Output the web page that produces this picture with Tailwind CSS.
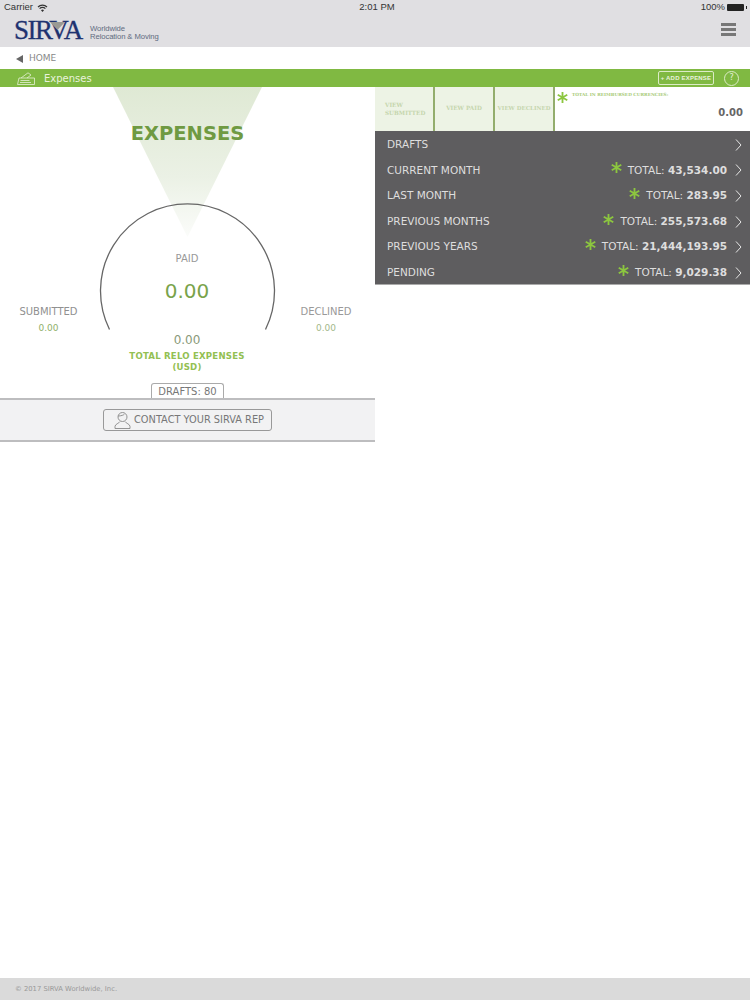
<!DOCTYPE html>
<html lang="en">
<head>
  <meta charset="UTF-8">
  <title>Expenses</title>
  <script src="https://cdn.jsdelivr.net/npm/@tailwindcss/browser@4"></script>
</head>
<body class="bg-white font-['DejaVu_Sans',sans-serif] w-[750px] h-[1000px] overflow-hidden flex flex-col">
  <!-- header -->
  <header class="h-[47px] shrink-0 bg-[#e0dfe2] relative">
    <div class="h-[15px] pl-[4px] pr-[3px] flex items-center justify-between text-[9.5px] text-[#333] font-['Liberation_Sans',sans-serif]">
      <div class="flex items-center gap-[4px] w-[200px]">
        <span>Carrier</span>
        <svg width="11" height="8" viewBox="0 0 11 8" fill="none" stroke="#333" stroke-width="1.2"><path d="M1 3a6.500 6.500 0 0 1 9 0M2.600 4.700a4 4 0 0 1 5.800 0"/><path d="M5.500 8L4 6.300a2 2 0 0 1 3 0z" fill="#333" stroke="none"/></svg>
      </div>
      <span class="font-medium ml-[3px]">2:01 PM</span>
      <div class="flex items-center justify-end gap-[2px] w-[200px]">
        <span>100%</span>
        <div class="w-[17px] h-[7px] bg-[#222] rounded-[1px]"></div>
        <div class="w-[1px] h-[3px] bg-[#222]"></div>
      </div>
    </div>
    <div class="flex items-start justify-between pl-[14px] pr-[14px] pt-[1px]">
      <div class="flex items-center">
        <div class="relative text-[27px] leading-[29px] text-[#1e3270] font-['Liberation_Serif',serif] tracking-[-1.500px] w-[70px] [-webkit-text-stroke:0.3px_#1e3270]">SIRVA
          <svg class="absolute left-[36px] top-[6px]" width="15" height="8" viewBox="0 0 15 8"><path d="M0 0H15L7.500 8z" fill="#9a9a94"/></svg>
        </div>
        <div class="ml-[6px] mt-[5px] text-[7.700px] leading-[8.500px] text-[#5f6b80] font-['Liberation_Sans',sans-serif] tracking-[-0.100px]">Worldwide<br>Relocation &amp; Moving</div>
      </div>
      <div class="flex flex-col gap-[2px] mt-[7px]">
        <div class="w-[15px] h-[3px] bg-[#777]"></div>
        <div class="w-[15px] h-[3px] bg-[#777]"></div>
        <div class="w-[15px] h-[3px] bg-[#777]"></div>
      </div>
    </div>
  </header>

  <!-- breadcrumb -->
  <div class="h-[22px] shrink-0 flex items-center pl-[16px] pt-[1px] gap-[6px] text-[9px] text-[#888]">
    <div class="w-0 h-0 border-y-[4px] border-y-transparent border-r-[7px] border-r-[#666]"></div>
    <span>HOME</span>
  </div>

  <!-- green bar -->
  <div class="h-[18px] shrink-0 bg-[#80b942] flex items-center pl-[17px] pr-[11px] text-white">
    <svg width="18" height="13" viewBox="0 0 18 13" fill="none" stroke="#e6f0d6" stroke-width="0.800">
      <path d="M2 6L.5 12.500H17.500V6z"/>
      <path d="M4 6L11 .8l3 2.200-4 3M3.500 8.500h9M3 10.500h11"/>
    </svg>
    <span class="ml-[9px] text-[10px] pt-[1px] text-[#e9f2dd]">Expenses</span>
    <div class="ml-auto h-[14px] w-[56px] border border-[#dcebc6] rounded-[2px] flex items-center justify-center text-[6px] text-[#e9f2dd] font-['Liberation_Sans',sans-serif] font-bold tracking-[0.200px]">+ ADD EXPENSE</div>
    <div class="ml-[10px] w-[15px] h-[15px] rounded-full border border-[#dcebc6] flex items-center justify-center text-[8px] text-[#e9f2dd]">?</div>
  </div>

  <main class="flex items-start">
    <!-- left panel -->
    <section class="w-[375px] shrink-0 flex flex-col">
      <div class="relative h-[311px] flex flex-col">
        <svg class="absolute inset-0" width="375" height="311" viewBox="0 0 375 311" fill="none">
          <defs>
            <linearGradient id="beam" x1="0" y1="0" x2="0" y2="1">
              <stop offset="0" stop-color="#dfe9d4"/>
              <stop offset="0.6" stop-color="#ebf1e5"/>
              <stop offset="1" stop-color="#fbfcfa"/>
            </linearGradient>
          </defs>
          <path d="M113 0H262L187.500 150z" fill="url(#beam)"/>
          <path d="M109.500 242.500A87 87 0 1 1 265.500 242.500" stroke="#666" stroke-width="1.300"/>
        </svg>
        <h1 class="relative mt-[34px] text-center text-[19.500px] leading-[26px] font-bold text-[#6f9a42]">EXPENSES</h1>
        <div class="relative mt-[105px] flex items-start">
          <div class="w-[97px] pt-[53px] text-center">
            <div class="text-[10px] leading-[14px] text-[#909090]">SUBMITTED</div>
            <div class="mt-[3px] text-[9px] leading-[12px] text-[#8fb06b]">0.00</div>
          </div>
          <div class="flex-1 text-center">
            <div class="text-[10px] leading-[14px] text-[#999]">PAID</div>
            <div class="mt-[12px] text-[20px] leading-[26px] text-[#79a34b]">0.00</div>
            <div class="mt-[28px] text-[12px] leading-[16px] text-[#8a9a7a]">0.00</div>
            <div class="text-[8.600px] leading-[11px] mt-[3px] font-bold text-[#93c052] tracking-[0.200px]">TOTAL RELO EXPENSES<br>(USD)</div>
          </div>
          <div class="w-[98px] pt-[53px] text-center">
            <div class="text-[10px] leading-[14px] text-[#999]">DECLINED</div>
            <div class="mt-[3px] text-[9px] leading-[12px] text-[#a3b88a]">0.00</div>
          </div>
        </div>
        <div class="absolute left-[151px] bottom-0 w-[73px] h-[15px] pt-[1px] border border-b-0 border-[#aaa] rounded-t-[3px] flex items-center justify-center text-[10px] text-[#777] bg-white">DRAFTS: 80</div>
      </div>
      <div class="h-[44px] bg-[#f2f2f3] border-y-2 border-y-[#bdbdbf] flex items-center justify-center">
        <div class="w-[169px] h-[22px] border border-[#999] rounded-[3px] flex items-center pl-[10px] gap-[3px] text-[9.800px] text-[#777] whitespace-nowrap">
          <svg class="shrink-0" width="17" height="18" viewBox="0 0 17 18" fill="none" stroke="#888" stroke-width="0.900">
            <circle cx="8.500" cy="6" r="4.500"/>
            <path d="M4 5c3 0 6-1 6.500-2M6 10.500C5 12.500 1 13 1 15.500V17.500H16V15.500C16 13 12 12.500 11 10.500"/>
          </svg>
          <span class="pt-[1px]">CONTACT YOUR SIRVA REP</span>
        </div>
      </div>
    </section>

    <!-- right panel -->
    <section class="flex-1 flex flex-col">
      <div class="h-[44px] flex">
        <div class="w-[60px] bg-[#edf3e5] border-r-2 border-r-[#93ad6d] flex items-center pl-[10px] pb-[1px] text-[5.700px] leading-[8px] font-bold text-[#c6d6ae] font-['DejaVu_Serif',serif]">VIEW<br>SUBMITTED</div>
        <div class="w-[60px] bg-[#edf3e5] border-r-2 border-r-[#93ad6d] flex items-center justify-center pb-[2px] text-[5.700px] font-bold text-[#c6d6ae] font-['DejaVu_Serif',serif]">VIEW PAID</div>
        <div class="w-[60px] bg-[#edf3e5] border-r-2 border-r-[#93ad6d] flex items-center justify-center pb-[2px] text-[5.500px] font-bold text-[#c6d6ae] font-['DejaVu_Serif',serif] whitespace-nowrap">VIEW DECLINED</div>
        <div class="flex-1 flex flex-col pr-[7px]">
          <div class="flex items-start pl-[2px] pt-[5px] gap-[4px]">
            <svg class="shrink-0" width="11" height="11" viewBox="0 0 12 12" stroke="#8cc63f" stroke-width="2"><path d="M6 0V12M.8 3L11.200 9M.8 9L11.200 3"/></svg>
            <span class="text-[4.300px] leading-[6px] font-bold text-[#a9cb7a] font-['DejaVu_Serif',serif] whitespace-nowrap">TOTAL IN REIMBURSED CURRENCIES:</span>
          </div>
          <div class="text-right text-[10px] leading-[12px] mt-[4px] font-bold text-[#666]">0.00</div>
        </div>
      </div>
      <ul class="h-[154px] pt-[1px] bg-[#5e5d5f] border-b border-b-[#aaa] flex flex-col text-[10.500px] text-[#dedede]">
        <li class="h-[25.600px] shrink-0 flex items-center pl-[12px] pr-[8px]">
          <span>DRAFTS</span>
          <svg class="ml-auto" width="7" height="12" viewBox="0 0 7 12" fill="none" stroke="#e6e6e6"><path d="M1 .5L6 6 1 11.500"/></svg>
        </li>
        <li class="h-[25.600px] shrink-0 flex items-center pl-[12px] pr-[8px]">
          <span>CURRENT MONTH</span>
          <svg class="ml-auto mb-[5px]" width="11" height="11" viewBox="0 0 12 12" stroke="#8cc63f" stroke-width="2"><path d="M6 0V12M.8 3L11.200 9M.8 9L11.200 3"/></svg>
          <span class="ml-[6px]">TOTAL: <b>43,534.00</b></span>
          <svg class="ml-[8px]" width="7" height="12" viewBox="0 0 7 12" fill="none" stroke="#e6e6e6"><path d="M1 .5L6 6 1 11.500"/></svg>
        </li>
        <li class="h-[25.600px] shrink-0 flex items-center pl-[12px] pr-[8px]">
          <span>LAST MONTH</span>
          <svg class="ml-auto mb-[5px]" width="11" height="11" viewBox="0 0 12 12" stroke="#8cc63f" stroke-width="2"><path d="M6 0V12M.8 3L11.200 9M.8 9L11.200 3"/></svg>
          <span class="ml-[6px]">TOTAL: <b>283.95</b></span>
          <svg class="ml-[8px]" width="7" height="12" viewBox="0 0 7 12" fill="none" stroke="#e6e6e6"><path d="M1 .5L6 6 1 11.500"/></svg>
        </li>
        <li class="h-[25.600px] shrink-0 flex items-center pl-[12px] pr-[8px]">
          <span>PREVIOUS MONTHS</span>
          <svg class="ml-auto mb-[5px]" width="11" height="11" viewBox="0 0 12 12" stroke="#8cc63f" stroke-width="2"><path d="M6 0V12M.8 3L11.200 9M.8 9L11.200 3"/></svg>
          <span class="ml-[6px]">TOTAL: <b>255,573.68</b></span>
          <svg class="ml-[8px]" width="7" height="12" viewBox="0 0 7 12" fill="none" stroke="#e6e6e6"><path d="M1 .5L6 6 1 11.500"/></svg>
        </li>
        <li class="h-[25.600px] shrink-0 flex items-center pl-[12px] pr-[8px]">
          <span>PREVIOUS YEARS</span>
          <svg class="ml-auto mb-[5px]" width="11" height="11" viewBox="0 0 12 12" stroke="#8cc63f" stroke-width="2"><path d="M6 0V12M.8 3L11.200 9M.8 9L11.200 3"/></svg>
          <span class="ml-[6px]">TOTAL: <b>21,444,193.95</b></span>
          <svg class="ml-[8px]" width="7" height="12" viewBox="0 0 7 12" fill="none" stroke="#e6e6e6"><path d="M1 .5L6 6 1 11.500"/></svg>
        </li>
        <li class="h-[25.600px] shrink-0 flex items-center pl-[12px] pr-[8px]">
          <span>PENDING</span>
          <svg class="ml-auto mb-[5px]" width="11" height="11" viewBox="0 0 12 12" stroke="#8cc63f" stroke-width="2"><path d="M6 0V12M.8 3L11.200 9M.8 9L11.200 3"/></svg>
          <span class="ml-[6px]">TOTAL: <b>9,029.38</b></span>
          <svg class="ml-[8px]" width="7" height="12" viewBox="0 0 7 12" fill="none" stroke="#e6e6e6"><path d="M1 .5L6 6 1 11.500"/></svg>
        </li>
      </ul>
    </section>
  </main>

  <footer class="mt-auto h-[22px] shrink-0 bg-[#dadada] flex items-center pl-[15px] text-[6.800px] text-[#999]">© 2017 SIRVA Worldwide, Inc.</footer>
</body>
</html>
